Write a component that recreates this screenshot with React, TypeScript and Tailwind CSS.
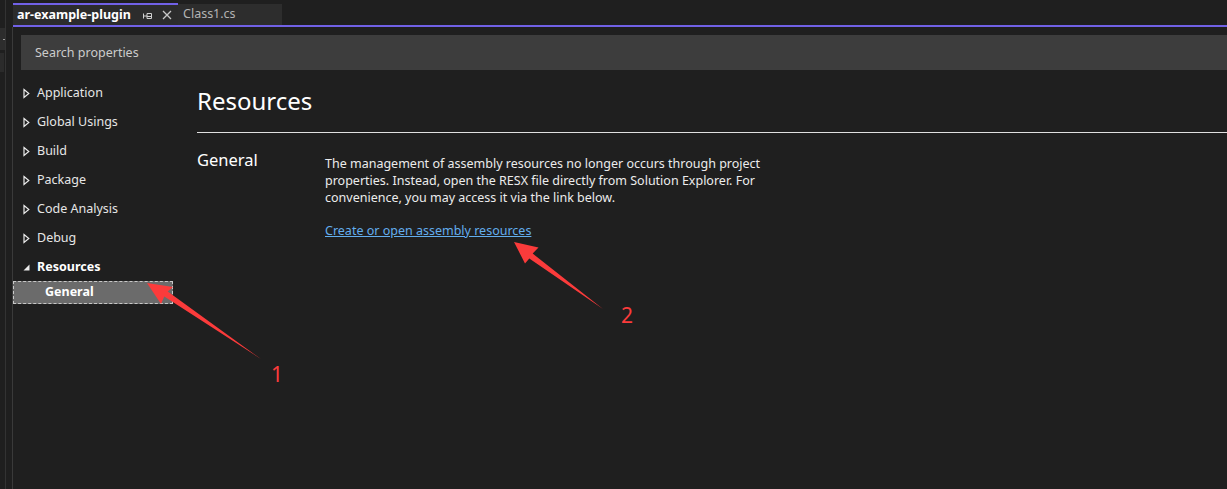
import React from 'react'

const font = { fontFamily: '"Noto Sans", "Open Sans", sans-serif' }

const navItems = ['Application', 'Global Usings', 'Build', 'Package', 'Code Analysis', 'Debug']

const Collapsed = () => (
  <svg width="7" height="11" viewBox="0 0 7 11" className="shrink-0">
    <path d="M1 1.5 L5.8 5.5 L1 9.5 Z" fill="none" stroke="#ececec" strokeWidth="1.2" strokeLinejoin="miter" />
  </svg>
)

const Expanded = () => (
  <svg width="7" height="11" viewBox="0 0 7 11" className="shrink-0">
    <path d="M6.5 2.5 L6.5 8.5 L0.5 8.5 Z" fill="#ececec" />
  </svg>
)

const PinIcon = () => (
  <svg width="10" height="8" viewBox="0 0 10 8">
    <path d="M0.5 1.5 V6.5 M0.5 4 H4 M4 1.5 H8.5 V6.5 H4 Z M4 4.5 H8.5" fill="none" stroke="#d0d0d0" strokeWidth="1" />
  </svg>
)

const CloseIcon = () => (
  <svg width="10" height="10" viewBox="0 0 10 10">
    <path d="M1 1 L9 9 M9 1 L1 9" stroke="#c8c8c8" strokeWidth="1.3" />
  </svg>
)

const Arrows = () => (
  <svg className="absolute inset-0 pointer-events-none" width="1227" height="489" viewBox="0 0 1227 489">
    <polygon points="147,283 173,287 167.7,291.5 261,359 164.3,296.5 161,304" fill="#fb3b3b" />
    <polygon points="514,242 538.5,247.5 532.7,253.6 603,309 529.3,258.4 525,263.5" fill="#fb3b3b" />
    <text x="271" y="382" fill="#fb3b3b" fontSize="21" style={font}>1</text>
    <text x="621" y="323" fill="#fb3b3b" fontSize="21" style={font}>2</text>
  </svg>
)

export default function App() {
  return (
    <div className="relative w-[1227px] h-[489px] overflow-hidden bg-[#1f1f1f] flex text-[#e6e6e6]" style={font}>
      {/* left tool strip */}
      <div className="w-[13px] h-full flex shrink-0">
        <div className="w-[6px] h-full border-r border-[#333333] flex flex-col">
          <div className="h-[28px]" />
          <div className="h-[22px] bg-[#2d2d2d] flex items-center justify-end">
            <div className="w-[2px] h-px bg-[#9a9a9a]" />
          </div>
          <div className="h-[3px]" />
          <div className="h-[19px] w-[4px] bg-[#2b2b2b]" />
        </div>
        <div className="w-[7px] h-full flex flex-col">
          <div className="h-[27px]" />
          <div className="flex-1 border-r border-[#3a3a3a]" />
        </div>
      </div>

      <div className="flex-1 flex flex-col min-w-0">
        {/* tabs */}
        <div className="h-[27px] flex items-end border-b-2 border-[#7161e6] shrink-0">
          <div className="h-[22px] w-[165px] bg-[#2c2c2c] border-t-2 border-[#7161e6] flex items-center pl-[4px] pr-[6px]">
            <span className="text-[12.5px] font-bold text-white leading-none">ar-example-plugin</span>
            <span className="ml-[12px] mt-[1px] flex"><PinIcon /></span>
            <span className="ml-[9px] flex"><CloseIcon /></span>
          </div>
          <div className="h-[21px] w-[104px] bg-[#2d2d2d] flex items-center pl-[5px]">
            <span className="text-[12.5px] text-[#b4b4b4] leading-none">Class1.cs</span>
          </div>
        </div>

        {/* search */}
        <div className="pt-[8px] pl-[8px]">
          <div className="h-[35px] bg-[#3d3d3d] flex items-center pl-[14px]">
            <span className="text-[12.5px] text-[#cccccc] mt-[1px]">Search properties</span>
          </div>
        </div>

        <div className="flex flex-1">
          {/* nav */}
          <div className="w-[184px] shrink-0 pt-[9px]">
            {navItems.map(item => (
              <div key={item} className="h-[29px] flex items-center pl-[10px] gap-[7px]">
                <Collapsed />
                <span className="text-[12.5px]">{item}</span>
              </div>
            ))}
            <div className="h-[29px] flex items-center pl-[10px] gap-[7px]">
              <Expanded />
              <span className="text-[12.5px] font-bold text-white">Resources</span>
            </div>
            <div className="-mt-px h-[23px] w-[160px] bg-[#6b6b6b] border border-dashed border-[#c8c8c8] flex items-center pl-[31px]">
              <span className="text-[12.5px] font-bold text-white">General</span>
            </div>
          </div>

          {/* content */}
          <div className="flex-1 flex flex-col">
            <div className="mt-[15px] h-[32px] flex items-center">
              <h1 className="text-[24px] text-white leading-none">Resources</h1>
            </div>
            <div className="mt-[15px] h-px bg-[#e0e0e0]" />
            <div className="flex pt-[16px]">
              <div className="w-[128px] h-[22px] flex items-center">
                <span className="text-[16.5px] text-white">General</span>
              </div>
              <div className="mt-[6px] flex flex-col">
                <p className="text-[12.5px] leading-[17px] text-[#ececec]">
                  The management of assembly resources no longer occurs through project
                  <br />
                  properties. Instead, open the RESX file directly from Solution Explorer. For
                  <br />
                  convenience, you may access it via the link below.
                </p>
                <a className="mt-[16px] text-[12.5px] leading-[17px] text-[#63aeee] underline">
                  Create or open assembly resources
                </a>
              </div>
            </div>
          </div>
        </div>
      </div>

      <Arrows />
    </div>
  )
}
